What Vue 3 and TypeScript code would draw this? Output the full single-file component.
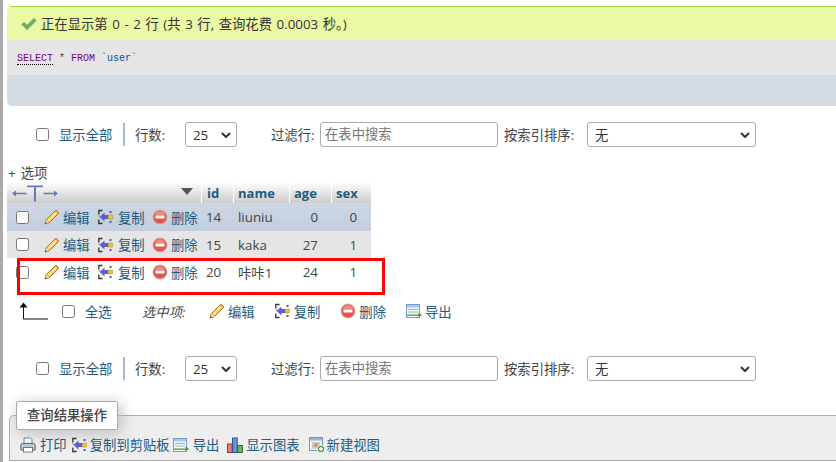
<script setup lang="ts">
interface Row { id: number; name: string; age: number; sex: number; cls: string }
const rows: Row[] = [
  { id: 14, name: 'liuniu', age: 0, sex: 0, cls: 'r-marked' },
  { id: 15, name: 'kaka', age: 27, sex: 1, cls: 'r-grey' },
  { id: 20, name: '咔咔1', age: 24, sex: 1, cls: 'r-white' },
]
const navRows = ['top', 'bottom']
</script>

<template>
  <div class="page">
    <svg class="defs" width="0" height="0" aria-hidden="true">
      <defs>
        <symbol id="i-edit" viewBox="0 0 16 16">
          <path d="M12 1 L15 4 L5.2 13.8 L1 15 L2.2 10.8 Z" fill="#f2bd4a" stroke="#a9742a" stroke-width="1"/>
          <path d="M3.6 10.4 L12 2.2 L13.6 3.8 L5.4 12.2 Z" fill="#fde59a"/>
          <path d="M11 2.2 L13.8 5 L15 4 L12 1 Z" fill="#e6a24a"/>
          <path d="M2.2 10.8 L5.2 13.8 L1 15 Z" fill="#f0d2a4"/>
          <path d="M1 15 L1.5 13 L3 14.5 Z" fill="#4a3018"/>
        </symbol>
        <symbol id="i-copy" viewBox="0 0 16 16">
          <path d="M4.5 1.5 H.8 V5.5 M.8 10.5 V14.5 H4.5" fill="none" stroke="#333" stroke-width="1.3"/>
          <path d="M.5 7 H2" stroke="#777" stroke-width="1"/>
          <path d="M1.5 8 L6.5 3.6 V6 H10 V10 H6.5 V12.4 Z" fill="#5e5ecb"/>
          <rect x="10.5" y="6" width="4" height="4" fill="#f2c21e" stroke="#a98a1a" stroke-width=".5"/>
          <rect x="11.5" y="2" width="2" height="2" fill="#4a5ac8"/>
          <rect x="11.5" y="12" width="2" height="2" fill="#4a5ac8"/>
        </symbol>
        <symbol id="i-del" viewBox="0 0 16 16">
          <circle cx="8" cy="8" r="7" fill="#e0574c" stroke="#d9a8a0" stroke-width="1"/>
          <path d="M2.4 6 A6 6 0 0 1 13.6 6 Z" fill="#f08a80"/>
          <rect x="3.5" y="6.5" width="9" height="3" rx=".5" fill="#fff"/>
        </symbol>
        <symbol id="i-export" viewBox="0 0 16 16">
          <rect x=".5" y="1.5" width="13" height="13" fill="#f2f6fb" stroke="#6f9fd0"/>
          <rect x="1" y="2" width="12" height="2.5" fill="#a8c8e8"/>
          <path d="M2 6.5 H12 M2 9 H12" stroke="#8aa8a0" stroke-width=".8"/>
          <path d="M1 11.5 H12.5 V9.5 L16 12 L12.5 14.5 V12.8 H1 Z" fill="#4f9a2a"/>
        </symbol>
        <symbol id="i-print" viewBox="0 0 16 16">
          <path d="M4 7 V1 H10.5 L12 2.5 V7 Z" fill="#eef4fa" stroke="#6c8296"/>
          <path d="M.8 8.5 Q.8 6.5 2.5 6.5 H13.5 Q15.2 6.5 15.2 8.5 V13 H.8 Z" fill="#bcc8d2" stroke="#5c6874"/>
          <rect x="3.5" y="10.5" width="9" height="4.5" fill="#fff" stroke="#6c7884"/>
        </symbol>
        <symbol id="i-chart" viewBox="0 0 16 16">
          <rect x=".5" y="7" width="4.6" height="8.5" fill="#ee7a70" stroke="#a33" stroke-width="1"/>
          <rect x="5.6" y="1" width="4.6" height="14.5" fill="#6a94dc" stroke="#258" stroke-width="1"/>
          <rect x="10.7" y="8.5" width="4.6" height="7" fill="#6cb85c" stroke="#362" stroke-width="1"/>
        </symbol>
        <symbol id="i-view" viewBox="0 0 16 16">
          <rect x=".5" y=".5" width="13" height="13" fill="#eef2f8" stroke="#7d94ae"/>
          <rect x="1" y="1" width="12" height="2.5" fill="#9ab4d0"/>
          <rect x="3" y="5" width="8" height="6.5" fill="#c4c8ce"/>
          <circle cx="7" cy="8" r="2" fill="#d09a50"/>
          <circle cx="12" cy="12" r="3.8" fill="#4aa34a" stroke="#fff" stroke-width=".8"/>
          <path d="M12 10 V14 M10 12 H14" stroke="#fff" stroke-width="1.3"/>
        </symbol>
      </defs>
    </svg>

    <div class="msg-box">
      <div class="msg">
        <svg class="check" viewBox="0 0 16 14" width="16" height="14">
          <path d="M0.5 7.5 L3 5 L6 8 L13 1 L15.5 3.5 L6 13 Z" fill="#6fae62" stroke="#8cc07e" stroke-width=".6"/>
        </svg>
        <span class="msg-text">正在显示第 0 - 2 行 (共 3 行, 查询花费 0.0003 秒。)</span>
      </div>
      <div class="sql">
        <span class="kw kw-u">SELECT</span> <span class="star">*</span> <span class="kw">FROM</span> <span class="tbl">`user`</span>
      </div>
      <div class="tools"></div>
    </div>

    <template v-for="pos in navRows" :key="pos">
      <div class="nav" :class="'nav-' + pos">
        <span class="cb"></span>
        <span class="show-all">显示全部</span>
        <span class="sep"></span>
        <span class="lab rows-lab">行数:</span>
        <span class="sel sel-num"><span>25</span><svg class="chev" viewBox="0 0 10 6" width="10" height="6"><path d="M1 1 L5 5 L9 1" fill="none" stroke="#333" stroke-width="2"/></svg></span>
        <span class="lab filter-lab">过滤行:</span>
        <span class="input">在表中搜索</span>
        <span class="lab sort-lab">按索引排序:</span>
        <span class="sel sel-sort"><span>无</span><svg class="chev" viewBox="0 0 10 6" width="10" height="6"><path d="M1 1 L5 5 L9 1" fill="none" stroke="#333" stroke-width="2"/></svg></span>
      </div>

      <template v-if="pos === 'top'">
        <div class="options"><span class="plus">+</span><span>选项</span></div>
        <div class="table-wrap">
          <table class="grid">
            <thead>
              <tr>
                <th class="c-act">
                  <div class="head-act">
                    <svg viewBox="0 0 46 18" width="46" height="18" class="tt">
                      <path d="M0 9.5 L4 6.5 V8.8 H14.5 V10.2 H4 V12.5 Z M46 9.5 L42 6.5 V8.8 H31.5 V10.2 H42 V12.5 Z" fill="#6a79b5"/>
                      <path d="M15 1.5 H31 V3.2 H24 V17.5 H22 V3.2 H15 Z" fill="#6a79b5"/>
                    </svg>
                    <svg class="tri" viewBox="0 0 12 7" width="12" height="7"><path d="M0 0 H12 L6 7 Z" fill="#555"/></svg>
                  </div>
                </th>
                <th class="c-id">id</th>
                <th class="c-name">name</th>
                <th class="c-age">age</th>
                <th class="c-sex">sex</th>
              </tr>
            </thead>
            <tbody>
              <tr v-for="r in rows" :key="r.id" :class="r.cls">
                <td class="c-act">
                  <div class="acts">
                    <span class="cb row-cb"></span>
                    <span class="act a-edit"><svg class="ic"><use href="#i-edit"/></svg>编辑</span>
                    <span class="act a-copy"><svg class="ic"><use href="#i-copy"/></svg>复制</span>
                    <span class="act a-del"><svg class="ic"><use href="#i-del"/></svg>删除</span>
                  </div>
                </td>
                <td class="c-id">{{ r.id }}</td>
                <td class="c-name">{{ r.name }}</td>
                <td class="c-age num">{{ r.age }}</td>
                <td class="c-sex num">{{ r.sex }}</td>
              </tr>
            </tbody>
          </table>
          <div class="highlight"></div>
        </div>
        <div class="bulk">
          <svg class="arrow" viewBox="0 0 30 20" width="30" height="20">
            <path d="M4.5 2 V18 H29" fill="none" stroke="#111" stroke-width="1"/>
            <path d="M0.5 6.5 L4.5 1.5 L8.5 6.5 Z" fill="#111"/>
          </svg>
          <span class="cb"></span>
          <span class="all">全选</span>
          <em class="with">选中项:</em>
          <span class="act"><svg class="ic"><use href="#i-edit"/></svg>编辑</span>
          <span class="act"><svg class="ic"><use href="#i-copy"/></svg>复制</span>
          <span class="act"><svg class="ic"><use href="#i-del"/></svg>删除</span>
          <span class="act"><svg class="ic"><use href="#i-export"/></svg>导出</span>
        </div>
      </template>
    </template>

    <fieldset class="ops">
      <legend class="legend">查询结果操作</legend>
      <div class="op-links">
        <span class="act"><svg class="ic"><use href="#i-print"/></svg>打印</span>
        <span class="act"><svg class="ic"><use href="#i-copy"/></svg>复制到剪贴板</span>
        <span class="act"><svg class="ic"><use href="#i-export"/></svg>导出</span>
        <span class="act"><svg class="ic"><use href="#i-chart"/></svg>显示图表</span>
        <span class="act"><svg class="ic"><use href="#i-view"/></svg>新建视图</span>
      </div>
    </fieldset>
  </div>
</template>

<style>
html, body { margin: 0; background: #fff; overflow: hidden; }
</style>

<style scoped>
.page {
  width: 836px; height: 462px; box-sizing: border-box; overflow: hidden;
  border-left: 3px solid #aaa; padding: 6px 0 0 4px;
  font-family: "Open Sans", "Noto Sans CJK SC", sans-serif;
  font-size: 13.33px; color: #444; position: relative;
}
.defs { position: absolute; }
.msg-box { width: 840px; border-radius: 5px 0 0 5px; overflow: hidden; }
.msg {
  height: 34px; box-sizing: border-box; background: #ebf8a4; border-top: 1px solid #a2d246;
  display: flex; align-items: center; padding-left: 14px; gap: 4px; color: #333;
}
.msg-text { word-spacing: 1.1px; }
.sql { height: 35px; background: #e5e5e5; box-sizing: border-box; padding: 12px 0 0 10px; font-family: "Liberation Mono", monospace; font-size: 10px; line-height: 13px; color: #444; }
.kw { color: #708; }
.kw-u { border-bottom: 1px dotted #000; }
.tbl { color: #05a; }
.tools { height: 31px; background: #d3dce3; }

.nav { display: flex; align-items: center; height: 25px; padding-left: 29px; color: #444; }
.nav-top { margin-top: 16px; }
.nav-bottom { margin-top: 31px; }
.cb { width: 11px; height: 11px; border: 1px solid #767676; border-radius: 2.5px; background: #fff; flex: none; }
.show-all { margin-left: 10px; width: 53px; color: #235a81; white-space: nowrap; }
.sep { width: 1px; height: 23px; margin: 0 10px 0 11px; background: #9fb4c8; border-left: 1px solid #bbb; flex: none; }
.lab { white-space: nowrap; color: #444; }
.rows-lab { width: 50px; }
.sel { box-sizing: border-box; height: 25px; border: 1px solid #aaa; border-radius: 3px; background: #fff; display: flex; align-items: center; justify-content: space-between; padding: 0 5px 0 7px; color: #333; flex: none; }
.sel-num { width: 52px; }
.filter-lab { margin-left: 34px; width: 49px; }
.input { box-sizing: border-box; width: 178px; height: 25px; border: 1px solid #aaa; border-radius: 3px; padding-left: 4px; line-height: 23px; color: #757575; flex: none; }
.sort-lab { margin-left: 6px; width: 83px; }
.sel-sort { width: 169px; }
.chev { flex: none; }

.options { margin-top: 16px; margin-left: 1px; height: 20px; line-height: 20px; color: #444; }
.plus { margin-right: 5px; }
.table-wrap { position: relative; width: 364px; margin-top: -1px; }
.grid { border-collapse: separate; border-spacing: 0; table-layout: fixed; width: 364px; }
.grid th { height: 21px; padding: 0 0 0 4px; text-align: left; font-weight: bold; color: #235a81; background: linear-gradient(#fff, #ccc); border-left: 1px solid #fff; box-sizing: border-box; font-size: 13px; }
.grid th.c-act { border-left: 0; padding: 0; }
.grid th.c-id { padding-left: 5px; }
.grid td { padding: 0 0 0 5px; box-sizing: border-box; white-space: nowrap; color: #444; }
.grid td.c-act { padding: 0; }
.c-act { width: 194px; }
.c-id { width: 32px; }
.c-name { width: 56px; }
.c-age { width: 42px; }
.c-sex { width: 40px; }
.grid td.num { text-align: right; padding-right: 13px; }
.grid td.c-sex.num { padding-right: 14px; }
.head-act { display: flex; align-items: center; justify-content: space-between; padding: 0 8px 0 5px; height: 21px; }
.tt { margin-top: 1px; }
.tri { margin-top: -2px; }
.r-marked td { height: 28px; background: linear-gradient(#ced6e2, #c2cede); }
.r-grey td { height: 27px; background: #e5e5e5; }
.r-white td { height: 28px; background: #fff; }
.acts { display: flex; align-items: center; padding-left: 9px; }
.row-cb { margin-right: 15px; }
.act { display: inline-flex; align-items: center; color: #235a81; white-space: nowrap; gap: 4px; }
.ic { width: 16px; height: 16px; flex: none; }
.a-edit { width: 54px; gap: 3px; }
.a-copy { width: 54px; }
.a-del { gap: 3px; }
.highlight { position: absolute; left: 10px; top: 76px; width: 368px; height: 37px; border: 3px solid #f00; box-sizing: border-box; pointer-events: none; }

.bulk { display: flex; align-items: center; height: 28px; margin-top: 11px; padding-left: 12px; }
.bulk .cb { margin-left: 13px; }
.all { margin-left: 10px; width: 26px; color: #235a81; white-space: nowrap; }
.with { margin-left: 31px; width: 67px; color: #444; white-space: nowrap; }
.bulk .act { margin-right: 20px; gap: 3px; }

.ops { box-sizing: border-box; margin: 20px 0 0 2px; padding: 0; width: 840px; height: 60px; border: 1px solid #aaa; border-radius: 5px 0 0 0; background: #eee; }
.legend { box-sizing: border-box; margin-left: 6px; padding: 0 10px; height: 29px; line-height: 27px; border: 1px solid #aaa; border-radius: 2px; background: #fff; box-shadow: 3px 3px 15px #bbb; font-weight: 500; color: #444; }
.op-links { display: flex; align-items: center; margin-top: 5px; padding-left: 10px; }
.op-links .act:nth-child(2) { margin-left: 5px; gap: 2px; }
.op-links .act:nth-child(3) { margin-left: 3px; }
.op-links .act:nth-child(4) { margin-left: 8px; gap: 3px; }
.op-links .act:nth-child(5) { margin-left: 9px; gap: 2px; }
</style>
